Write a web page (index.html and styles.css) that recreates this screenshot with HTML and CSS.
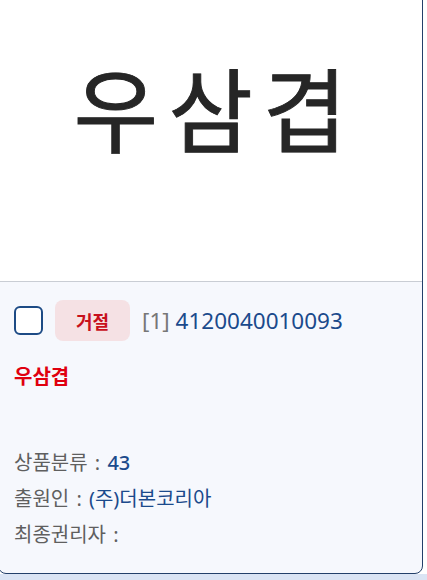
FILE: index.html
```html
<!DOCTYPE html>
<html lang="ko">
<head>
<meta charset="utf-8">
<title>상표 검색 결과</title>
<link rel="stylesheet" href="styles.css">
</head>
<body>
<div class="card">
  <div class="thumb"><span class="mark">우삼겹</span></div>
  <div class="info">
    <div class="head">
      <span class="check"></span>
      <span class="badge">거절</span>
      <span class="num"><span class="idx">[1]</span> 4120040010093</span>
    </div>
    <div class="title">우삼겹</div>
    <ul class="meta">
      <li><span class="label">상품분류 :</span> <span class="val strong">43</span></li>
      <li><span class="label">출원인 :</span> <span class="val">(주)더본코리아</span></li>
      <li><span class="label">최종권리자 :</span></li>
    </ul>
  </div>
</div>
<div class="next"></div>
</body>
</html>
```
FILE: styles.css
```css
html, body {
  margin: 0;
  padding: 0;
  background: #ffffff;
  font-family: "Noto Sans", "Noto Sans CJK KR", sans-serif;
}
.card {
  margin: -2px 4px 0 -2px;
  border: 1.5px solid #23406a;
  border-radius: 0 0 8px 8px;
  background: #f6f8fd;
  overflow: hidden;
}
.thumb {
  height: 283px;
  background: #ffffff;
  border-bottom: 1px solid #c9cdd4;
  display: flex;
  justify-content: center;
  align-items: flex-start;
  box-sizing: border-box;
}
.mark {
  font-family: "Noto Sans CJK KR", sans-serif;
  font-size: 92px;
  font-weight: 400;
  color: #262626;
  letter-spacing: 10px;
  margin-left: 10px;
  margin-top: 52px;
  line-height: 1.2;
  -webkit-text-stroke: 0.9px #262626;
}
.info {
  padding: 18px 15px 20px 15px;
}
.head {
  display: flex;
  align-items: center;
  gap: 12px;
}
.check {
  width: 25px;
  height: 25px;
  border: 2px solid #1d4b85;
  border-radius: 6px;
  background: #ffffff;
}
.badge {
  display: flex;
  align-items: center;
  justify-content: center;
  width: 75px;
  height: 41px;
  border-radius: 8px;
  background: #f5e1e4;
  color: #c8101c;
  font-family: "Noto Sans CJK KR", sans-serif;
  font-size: 18px;
  font-weight: 700;
}
.num {
  font-size: 22.5px;
  color: #1b4a8c;
}
.idx {
  color: #777777;
}
.title {
  margin-top: 21px;
  font-family: "Noto Sans CJK KR", sans-serif;
  font-size: 20px;
  font-weight: 700;
  color: #e0000f;
  line-height: 28px;
}
.meta {
  list-style: none;
  margin: 55px 0 0 0;
  padding: 0;
}
.meta li {
  font-size: 20px;
  font-weight: 400;
  line-height: 36px;
  height: 36px;
  word-spacing: 2px;
}
.label {
  color: #5f5f5f;
}
.val {
  color: #1b4a8c;
}
.val.strong {
  font-weight: 500;
}
.next {
  height: 6px;
  background: #dae4f4;
}
```
